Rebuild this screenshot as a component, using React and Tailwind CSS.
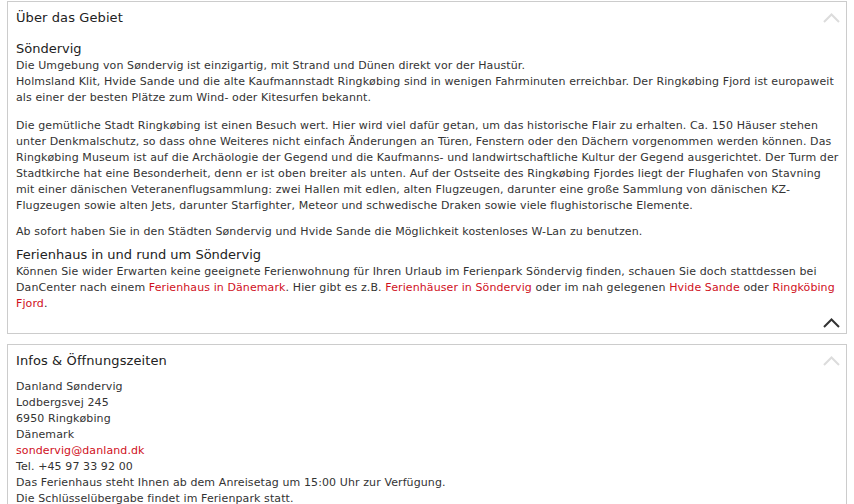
const red = "text-[#d0101c]";

function Chevron({ dark }) {
  return (
    <svg
      width="17"
      height="10"
      viewBox="0 0 17 10"
      className={dark ? "text-[#333]" : "text-[#dcdcdc]"}
    >
      <path d="M1 9 L8.5 1.5 L16 9" fill="none" stroke="currentColor" strokeWidth="2" />
    </svg>
  );
}

function Box({ title, children, footer }) {
  return (
    <div className="border border-[#cccccc] bg-white">
      <div className="flex items-center justify-between h-[32px] pl-2 pr-[6px]">
        <h2 className="text-[13px] text-[#222]">{title}</h2>
        <Chevron />
      </div>
      <div className="px-2 whitespace-nowrap">{children}</div>
      {footer}
    </div>
  );
}

export default function App() {
  return (
    <div
      className="bg-white h-[504px] overflow-hidden px-[7px] pt-[1px] text-[#333] text-[11px] leading-[16px] tracking-[0.1px]"
      style={{ fontFamily: "Verdana, 'DejaVu Sans', sans-serif" }}
    >
      <Box
        title="Über das Gebiet"
        footer={
          <div className="flex justify-end pr-[6px] h-[21px] items-center">
            <Chevron dark />
          </div>
        }
      >
        <h3 className="text-[13px] leading-[18px] text-[#222] mt-[6px] tracking-normal">Söndervig</h3>
        <p>
          Die Umgebung von Søndervig ist einzigartig, mit Strand und Dünen direkt vor der Haustür.
          <br />
          Holmsland Klit, Hvide Sande und die alte Kaufmannstadt Ringkøbing sind in wenigen Fahrminuten erreichbar. Der Ringkøbing Fjord ist europaweit
          <br />
          als einer der besten Plätze zum Wind- oder Kitesurfen bekannt.
        </p>
        <p className="mt-[12px]">
          Die gemütliche Stadt Ringkøbing ist einen Besuch wert. Hier wird viel dafür getan, um das historische Flair zu erhalten. Ca. 150 Häuser stehen
          <br />
          unter Denkmalschutz, so dass ohne Weiteres nicht einfach Änderungen an Türen, Fenstern oder den Dächern vorgenommen werden können. Das
          <br />
          Ringkøbing Museum ist auf die Archäologie der Gegend und die Kaufmanns- und landwirtschaftliche Kultur der Gegend ausgerichtet. Der Turm der
          <br />
          Stadtkirche hat eine Besonderheit, denn er ist oben breiter als unten. Auf der Ostseite des Ringkøbing Fjordes liegt der Flughafen von Stavning
          <br />
          mit einer dänischen Veteranenflugsammlung: zwei Hallen mit edlen, alten Flugzeugen, darunter eine große Sammlung von dänischen KZ-
          <br />
          Flugzeugen sowie alten Jets, darunter Starfighter, Meteor und schwedische Draken sowie viele flughistorische Elemente.
        </p>
        <p className="mt-[10px]">
          Ab sofort haben Sie in den Städten Søndervig und Hvide Sande die Möglichkeit kostenloses W-Lan zu benutzen.
        </p>
        <h3 className="text-[13px] leading-[18px] text-[#222] mt-[6px] tracking-normal">
          Ferienhaus in und rund um Söndervig
        </h3>
        <p>
          Können Sie wider Erwarten keine geeignete Ferienwohnung für Ihren Urlaub im Ferienpark Söndervig finden, schauen Sie doch stattdessen bei
          <br />
          DanCenter nach einem <a className={red}>Ferienhaus in Dänemark</a>. Hier gibt es z.B.{" "}
          <a className={red}>Ferienhäuser in Söndervig</a> oder im nah gelegenen{" "}
          <a className={red}>Hvide Sande</a> oder <a className={red}>Ringköbing</a>
          <br />
          <a className={red}>Fjord</a>.
        </p>
      </Box>

      <div className="mt-[10px]">
        <Box title="Infos & Öffnungszeiten">
          <div className="mt-[2px]">
            <p>Danland Søndervig</p>
            <p>Lodbergsvej 245</p>
            <p>6950 Ringkøbing</p>
            <p>Dänemark</p>
            <p>
              <a className={red}>sondervig@danland.dk</a>
            </p>
            <p>Tel. +45 97 33 92 00</p>
            <p>Das Ferienhaus steht Ihnen ab dem Anreisetag um 15:00 Uhr zur Verfügung.</p>
            <p>Die Schlüsselübergabe findet im Ferienpark statt.</p>
          </div>
        </Box>
      </div>
    </div>
  );
}
